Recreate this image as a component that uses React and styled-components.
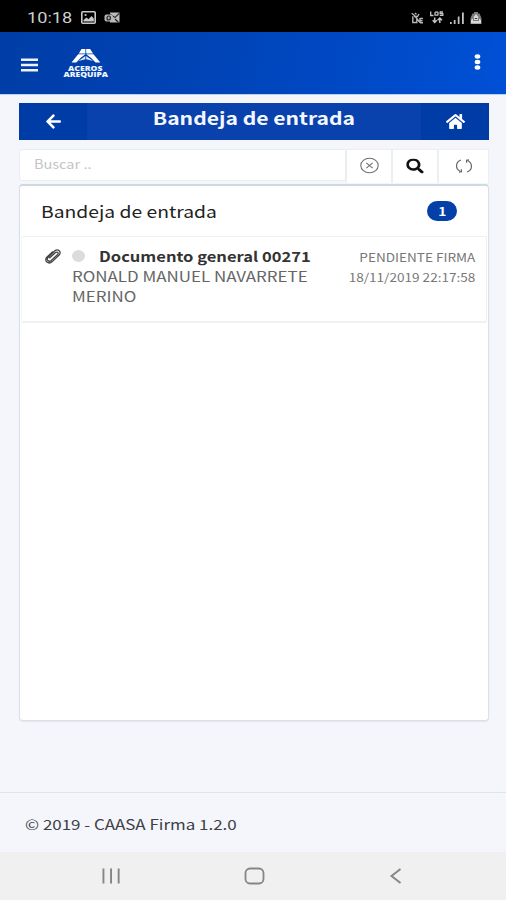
import React from "react";
import styled, { createGlobalStyle } from "styled-components";
import { FaArrowLeft, FaHome, FaSearch } from "react-icons/fa";

const GlobalStyle = createGlobalStyle`
  * {
    box-sizing: border-box;
  }
  body {
    margin: 0;
    background: #f4f6fb;
    font-family: "Noto Sans CJK JP", "Noto Sans", sans-serif;
  }
`;

const Screen = styled.div`
  width: 506px;
  height: 900px;
  display: flex;
  flex-direction: column;
  overflow: hidden;
  background: #f4f6fb;
`;

// wide text, the screen is stretched horizontally
const Label = styled.span`
  display: inline-block;
  white-space: nowrap;
  font-size: ${(props) => props.$size}px;
  font-weight: ${(props) => props.$weight || 400};
  color: ${(props) => props.$color};
  line-height: ${(props) => props.$line || 20}px;
  transform: scaleX(${(props) => props.$wide || 1});
  transform-origin: ${(props) => props.$origin || "left"} center;
`;

const StatusBar = styled.div`
  height: 32px;
  flex: none;
  display: flex;
  align-items: center;
  padding: 3px 24px 0 27px;
  background: #000;
`;

const Clock = styled(Label)`
  font-family: Roboto, sans-serif;
  width: 54px;
`;

const StatusIcons = styled.div`
  display: flex;
  align-items: center;
  gap: ${(props) => props.$gap}px;
  margin-left: ${(props) => (props.$right ? "auto" : 0)};
`;

const TopBar = styled.header`
  height: 63px;
  flex: none;
  display: flex;
  align-items: center;
  padding: 0 25px 0 21px;
  background: linear-gradient(100deg, #003da6 0%, #0044b8 45%, #0050d6 100%);
  border-bottom: 1px solid #b4d3ef;
`;

const MenuIcon = styled.svg`
  margin-top: 4px;
`;

const Logo = styled.svg`
  margin: 2px 0 0 25px;
`;

const Kebab = styled.svg`
  margin: -2px 0 0 auto;
`;

const Main = styled.main`
  height: 697px;
  flex: none;
  padding: 8px 17px 0 19px;
`;

const TitleBar = styled.div`
  display: flex;
  height: 37px;
  background: #0942ad;
`;

const TitleButton = styled.div`
  width: 68px;
  display: flex;
  align-items: center;
  justify-content: center;
  background: #003ca6;
  color: #fff;
`;

const Title = styled.div`
  flex: 1;
  text-align: center;
  padding-top: 3px;
`;

const SearchRow = styled.div`
  display: flex;
  height: 34px;
  margin-top: 9px;
`;

const SearchField = styled.div`
  flex: 1;
  height: 32px;
  display: flex;
  align-items: center;
  padding: 0 14px 3px;
  background: #fff;
  border: 1px solid #e9ecf0;
  border-radius: 3px 0 0 3px;
`;

const SearchButton = styled.div`
  width: ${(props) => props.$w}px;
  display: flex;
  align-items: center;
  justify-content: center;
  padding-bottom: 2px;
  background: #fff;
  border: 1px solid #eceef1;
  border-width: 1px 1px 0;
  color: #111;
`;

const Card = styled.section`
  height: 537px;
  margin-top: 1px;
  background: #fff;
  border: 1px solid #dbe0e6;
  border-top: 2px solid #ccdbdd;
  border-radius: 4px;
  box-shadow: 0 1px 1px #e3e7ec;
`;

const CardHeader = styled.div`
  height: 50px;
  display: flex;
  align-items: center;
  justify-content: space-between;
  padding: 0 31px 0 21px;
`;

const Badge = styled.div`
  width: 30px;
  height: 20px;
  margin-top: -1px;
  display: flex;
  align-items: center;
  justify-content: center;
  border-radius: 10px;
  background: #0540a9;
`;

const Item = styled.article`
  height: 87px;
  display: flex;
  padding: 9px 11px 0 22px;
  margin: 0 1px;
  border: 1px solid #edeff0;
  border-left: 1px solid #f3f4f5;
  border-bottom: 2px solid #f0f1f2;
  border-radius: 2px;
`;

const Clip = styled.svg`
  flex: none;
  margin: 2px 10px 0 0;
`;

const ItemText = styled.div`
  flex: 1;
  display: flex;
  flex-direction: column;
  align-items: flex-start;
`;

const ItemTitle = styled.div`
  display: flex;
  align-items: center;
  height: 20px;
`;

const Dot = styled.span`
  width: 13px;
  height: 12px;
  margin-right: 14px;
  border-radius: 50%;
  background: #dcdcdc;
`;

const ItemMeta = styled.div`
  display: flex;
  flex-direction: column;
  align-items: flex-end;
  padding-top: 1px;
`;

const Footer = styled.footer`
  height: 60px;
  flex: none;
  display: flex;
  align-items: flex-start;
  padding: 21px 25px 0;
  border-top: 1px solid #e0e3e8;
`;

const NavBar = styled.nav`
  height: 48px;
  flex: none;
  display: flex;
  align-items: center;
  justify-content: space-between;
  padding: 0 104px 0 101px;
  background: #f0f0f0;
`;

function StatusLeft() {
  return (
    <StatusIcons $gap={8}>
      <svg width="15" height="13" viewBox="0 0 15 13">
        <rect x="0.8" y="0.8" width="13.4" height="11.4" rx="1" fill="none" stroke="#c9c9c9" strokeWidth="1.6" />
        <path d="M2.5 10.5V9l3-2.5 2 1.8 3-3.3 2.3 2.5v3z" fill="#c9c9c9" />
        <circle cx="4.6" cy="4" r="1.1" fill="#c9c9c9" />
      </svg>
      <svg width="16" height="12" viewBox="0 0 16 12">
        <path d="M6 .5h9.500v10H6z" fill="#bdbdbd" />
        <path d="M6 2l5 3.500L15.500 1" fill="none" stroke="#333" strokeWidth="1.1" />
        <rect x="0.5" y="2.5" width="8.5" height="7" rx="2" fill="#b5b5b5" />
        <ellipse cx="4.7" cy="6" rx="1.7" ry="2" fill="none" stroke="#222" strokeWidth="1.2" />
        <path d="M11 7l3.500 3.500" stroke="#222" strokeWidth="1.2" />
      </svg>
    </StatusIcons>
  );
}

function StatusRight() {
  return (
    <StatusIcons $gap={6} $right>
      {/* vibrate / muted */}
      <svg width="13" height="12" viewBox="0 0 13 12" fill="none" stroke="#b4b4b4" strokeWidth="1.4">
        <path d="M.8 1.200l2 1.800M4 1l1.500 1.500M1.800 4.200v6.300h4V7M3 4.500h3.500l1.500-2.500M3 3l6 7.500M9 6v5M9 6.500h3M9 8.700h2.500M9 10.800h3" />
      </svg>
      {/* mobile data */}
      <svg width="14" height="13" viewBox="0 0 14 13" fill="none" stroke="#c4c4c4" strokeWidth="1.300">
        <path d="M.7.5v4h2.800M5 1.200v3.500M5 1.200h3M5 4.200h3M8 1v3.600M13 1h-2.800v1.700h2.600v1.700H9.800" />
        <path d="M4.700 6.500v5M2.700 9.200l2 2.300 2.200-2.300M9.800 12V7M7.600 9.300l2.200-2.300L12 9.300" strokeWidth="1.500" />
      </svg>
      <svg width="14" height="12" viewBox="0 0 14 12" fill="#c4c4c4">
        <path d="M0 10h1.700v2H0zM3.800 8h1.700v4H3.800zM7.800 4.500h1.700V12H7.800zM12 .5h1.800V12H12z" />
      </svg>
      <svg width="12" height="12" viewBox="0 0 12 12">
        <path d="M4 0h4v1.500h1.500L11.500 6v6H.5V6l2-4.500H4z" fill="#7c7c7c" />
        <path d="M6 2l2.800 3.500H8V8H4V5.500h-.8zM1 8l2-1.500V9h6V6.500L11 8v3.500H1z" fill="#d8d8d8" />
        <path d="M4.800 6.500h2.400" stroke="#333" />
      </svg>
    </StatusIcons>
  );
}

function AcerosLogo() {
  return (
    <Logo width="46" height="32" viewBox="0 0 46 32">
      <path d="M18.500 1h3.900v4.500h-6.600zM23.200 1h3.900l3 4.500h-6.900z" fill="#fff" />
      <path d="M15.200 6.300h7.200L17.500 10l-4.200 4.500H8.500zM23.200 6.300h7.300l6.800 8.200h-4.800L28.200 10z" fill="#fff" />
      <path d="M15.500 13l6.900-5v3.200zM23.200 8l6.900 5-6.900-1.800z" fill="#dbe8ff" />
      <g fill="#f2f6ff" fontFamily="Open Sans, sans-serif" fontWeight="800" fontSize="6.200">
        <text x="5" y="22.600" textLength="34.500" lengthAdjust="spacingAndGlyphs">ACEROS</text>
        <text x="0.5" y="29" textLength="44.500" lengthAdjust="spacingAndGlyphs">AREQUIPA</text>
      </g>
    </Logo>
  );
}

function App() {
  return (
    <Screen>
      <GlobalStyle />
      <StatusBar>
        <Clock $size={15.5} $color="#cfcfcf" $wide={1.17}>10:18</Clock>
        <StatusLeft />
        <StatusRight />
      </StatusBar>

      <TopBar>
        <MenuIcon width="17" height="14" viewBox="0 0 17 14" fill="#eef4ff">
          <path d="M0 .5h17V3H0zM0 5.700h17v2.600H0zM0 11h17v2.500H0z" />
        </MenuIcon>
        <AcerosLogo />
        <Kebab width="7" height="16" viewBox="0 0 7 16" fill="#fff">
          <ellipse cx="3.5" cy="2.5" rx="2.8" ry="2.2" />
          <ellipse cx="3.5" cy="8" rx="2.8" ry="2.2" />
          <ellipse cx="3.5" cy="13.5" rx="2.8" ry="2.2" />
        </Kebab>
      </TopBar>

      <Main>
        <TitleBar>
          <TitleButton>
            <FaArrowLeft size={17} />
          </TitleButton>
          <Title>
            <Label $size={17.5} $weight={700} $color="#f4f7fd" $wide={1.205} $origin="center">
              Bandeja de entrada
            </Label>
          </Title>
          <TitleButton>
            <FaHome size={19} />
          </TitleButton>
        </TitleBar>

        <SearchRow>
          <SearchField>
            <Label $size={12.5} $color="#c3c5c8" $wide={1.16}>Buscar ..</Label>
          </SearchField>
          <SearchButton $w={46}>
            <svg width="20" height="17" viewBox="0 0 20 17" fill="none" stroke="#707070" strokeWidth="1.1">
              <ellipse cx="10.500" cy="8.500" rx="8.700" ry="7.300" />
              <path d="M7.300 5.800l6.400 5.400M13.700 5.800l-6.400 5.400" />
            </svg>
          </SearchButton>
          <SearchButton $w={46}>
            <FaSearch size={16} transform="scale(1.1 .95)" />
          </SearchButton>
          <SearchButton $w={51}>
            <svg width="18" height="16" viewBox="0 0 18 16" fill="none" stroke="#666" strokeWidth="1.2">
              <path d="M6 2C.3 4 0 11 5.500 13.500M12 14C17.700 12 18 5 12.500 2.500" />
              <path d="M4 14.200l2.500-.4-.2-2.600M14 1.800l-2.500.4.2 2.600" />
            </svg>
          </SearchButton>
        </SearchRow>

        <Card>
          <CardHeader>
            <Label $size={16.5} $color="#222" $wide={1.17}>Bandeja de entrada</Label>
            <Badge>
              <Label $size={11.5} $weight={700} $color="#fff" $wide={1.2} $origin="center">1</Label>
            </Badge>
          </CardHeader>
          <Item>
            <Clip width="18" height="17" viewBox="0 0 18 17" fill="none" stroke="#444" strokeWidth="1.300">
              <path d="M5.200 10.200l6.300-5.600c1.600-1.300 3.600.3 2.200 1.800L7.200 12.500c-2.400 2-5.400-.8-3.200-3L10.600 3c3.200-2.800 7.500.8 4.500 4L8.300 13.600c-3.800 3.300-9-.7-5.300-4.600L9 3.500" />
            </Clip>
            <ItemText>
              <ItemTitle>
                <Dot />
                <Label $size={14} $weight={700} $color="#333" $wide={1.18}>Documento general 00271</Label>
              </ItemTitle>
              <Label $size={14} $color="#666" $wide={1.21}>RONALD MANUEL NAVARRETE</Label>
              <Label $size={14} $color="#666" $wide={1.21}>MERINO</Label>
            </ItemText>
            <ItemMeta>
              <Label $size={11.5} $color="#777" $wide={1.18} $origin="right">PENDIENTE FIRMA</Label>
              <Label $size={11.5} $color="#777" $wide={1.18} $origin="right">18/11/2019 22:17:58</Label>
            </ItemMeta>
          </Item>
        </Card>
      </Main>

      <Footer>
        <Label $size={14} $color="#3d4045" $wide={1.21}>© 2019 - CAASA Firma 1.2.0</Label>
      </Footer>

      <NavBar>
        <svg width="20" height="16" viewBox="0 0 20 16" fill="#858585">
          <path d="M1.500 .5h1.900v15H1.500zM9.100 .5H11v15H9.100zM16.700 .5h1.900v15h-1.900z" />
        </svg>
        <svg width="22" height="18" viewBox="0 0 22 18" fill="none" stroke="#858585" strokeWidth="1.8">
          <rect x="1.500" y="1.500" width="18" height="15" rx="4.500" />
        </svg>
        <svg width="14" height="16" viewBox="0 0 14 16" fill="none" stroke="#858585" strokeWidth="1.900">
          <path d="M12.500 1L3.500 8l9 7" />
        </svg>
      </NavBar>
    </Screen>
  );
}

export default App;
